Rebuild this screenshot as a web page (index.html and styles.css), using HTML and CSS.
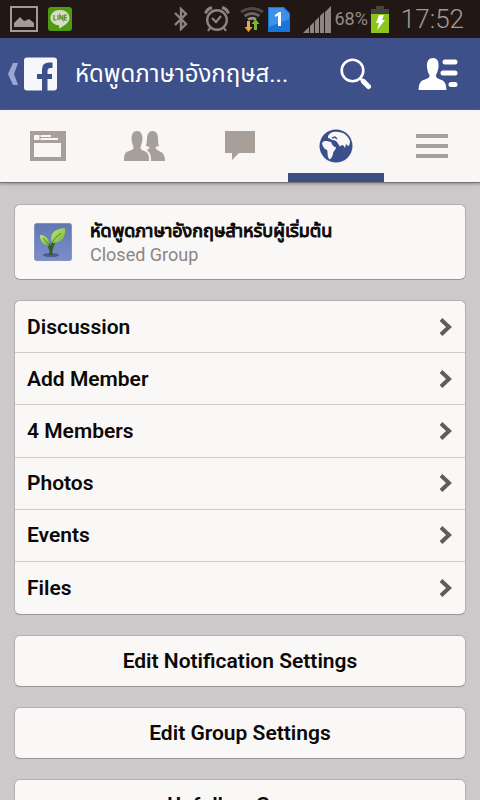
FILE: index.html
```html
<!DOCTYPE html>
<html lang="th">
<head>
<meta charset="utf-8">
<meta name="viewport" content="width=device-width, initial-scale=1">
<title>หัดพูดภาษาอังกฤษสำหรับผู้เริ่มต้น</title>
<link rel="stylesheet" href="styles.css">
</head>
<body>
<div class="status">
  <div class="status-left">
    <svg width="28" height="26" viewBox="0 0 28 26"><rect x="1" y="1" width="26" height="24" fill="none" stroke="#a39a94" stroke-width="2"/><path d="M4 21V17L7 14L10 11L12 13L14 15L17 14L19 13L24 17V21Z" fill="#a39a94"/></svg>
    <svg width="24" height="24" viewBox="0 0 24 24"><rect width="24" height="24" rx="3" fill="#4f9a12"/><path d="M12 3C6.500 3 2.500 6.500 2.500 11C2.500 15 6 17.500 10.500 18.300C11.500 18.700 11.200 20 11 21.500C15 19.500 21.500 16 21.500 11C21.500 6.500 17.500 3 12 3Z" fill="#d8dccb"/><path d="M6 8V13H8.500M10 8V13M12 13V8L15 13V8M19 8H16.700V13H19M16.700 10.500H19" fill="none" stroke="#4f8a22" stroke-width="1.200"/></svg>
  </div>
  <div class="status-right">
    <svg class="bt" width="14" height="24" viewBox="0 0 14 24"><path d="M1 6L12 17L7 22V2L12 7L1 18" fill="none" stroke="#8d847e" stroke-width="2.400"/></svg>
    <svg class="alarm" width="26" height="26" viewBox="0 0 26 26"><g fill="none" stroke="#8d847e" stroke-width="2.400"><circle cx="13" cy="14" r="9.800"/><path d="M8 12L12 16L17 10M6 22L4 25M20 22L22 25" stroke-width="2.200"/><path d="M1.500 7.500Q3 3 8 1.500M24.500 7.500Q23 3 18 1.500" stroke-width="3"/></g></svg>
    <svg class="wifi" width="24" height="28" viewBox="0 0 24 28"><g fill="none" stroke-width="3"><path d="M1 7Q12 0 23 7" stroke="#504843"/><path d="M4.500 11Q12 6 19.500 11" stroke="#6c645e"/><path d="M8 14.500Q12 12 16 14.500" stroke="#968e88"/></g><path d="M7 16H10V22H12.500L8.500 27L4.500 22H7Z" fill="#f2a33c"/><path d="M14 25H17V19H19.500L15.500 14L11.500 19H14Z" fill="#79b82d"/></svg>
    <svg class="sim" width="22" height="25" viewBox="0 0 22 25"><path d="M0 0H16L22 6V25H0Z" fill="#1976d9"/><path d="M1 1H15L21 7V12L1 20Z" fill="#3d91e8"/><path d="M7 8L11 5H13V19H10V8.500L7 10Z" fill="#fff"/></svg>
    <svg class="signal" width="28" height="27" viewBox="0 0 28 27"><path d="M0 27L6 21V27ZM7 27V20L11 16V27ZM12 27V15L16 11V27ZM17 27V10L21 6V27ZM22 27V6L28 0V27Z" fill="#8c8580"/></svg>
    <span class="percent">68%</span>
    <svg class="battery" width="18" height="28" viewBox="0 0 18 28"><path d="M5 1H13V4H18V9H0V4H5Z" fill="#48423e"/><path d="M0 9H18V28H0Z" fill="#8cc51c"/><path d="M8 10H13L11 15H14L6 25L8 18H5Z" fill="#fff"/></svg>
    <time class="clock">17:52</time>
  </div>
</div>
<header class="appbar">
  <button class="home" aria-label="Back">
    <svg width="50" height="34" viewBox="0 0 50 34"><path d="M5 6H10L6 17L10 28H5L0 17Z" fill="#9aa7d3"/><path d="M19 0.500H46Q49 0.500 49 3.500V30.500Q49 33.500 46 33.500H39.500V22H44V17H39.500V14Q39.500 11 42.500 11H44.500V5.500H41Q34 5.500 34 12.500V17H29V22H34V33.500H19Q16 33.500 16 30.500V3.500Q16 .5 19 .5Z" fill="#f6f7fb"/></svg>
  </button>
  <h1 class="title">หัดพูดภาษาอังกฤษส...</h1>
  <button class="search" aria-label="Search">
    <svg width="32" height="32" viewBox="0 0 32 32"><circle cx="12.500" cy="12.500" r="10.800" fill="none" stroke="#fff" stroke-width="2.600"/><path d="M20 20L23 23" stroke="#fff" stroke-width="3"/><path d="M23.500 23.500L28.500 28.500" stroke="#fff" stroke-width="5" stroke-linecap="round"/></svg>
  </button>
  <button class="friends" aria-label="Friends list">
    <svg width="40" height="34" viewBox="0 0 40 34"><path d="M15 1C19.500 1 21 4.500 20.500 10C20 14 19 16 18 18C17.500 21 20 21.500 23.500 23C27 24.500 28 27 28.500 33H.5C1 27 2 24.500 5.500 23C9.500 21.500 12 21 11.500 18C10 16 9.500 14 9 10C8.500 4 11 1 15 1Z" fill="#fff"/><path d="M27 5H37M25 16H37M33 27.500H37" stroke="#fff" stroke-width="5" stroke-linecap="round"/></svg>
  </button>
</header>
<nav class="tabs">
  <a class="tab" href="#feed" aria-label="News feed"><svg width="36" height="30" viewBox="0 0 36 30"><path fill-rule="evenodd" d="M0 0H36V30H0ZM4 4V9H28V7H21V4ZM4 12V26H31V12Z" fill="#a79f99"/><path d="M10 4V9M10 6.500H22" stroke="#a79f99"/></svg></a>
  <a class="tab" href="#people" aria-label="Friends"><svg width="41" height="30" viewBox="0 0 41 30"><g fill="#a79f99"><path d="M13 0C17 0 18.500 3.500 18.500 8C18.500 12 16.500 14 16.500 17C17 20 22 19 24 23C25 25 25 27 25 30H0C0 27 0 25 1 23C3 19 9 20 9.500 17C9.500 14 7.500 12 7.500 8C7.500 3.500 9 0 13 0Z"/><path d="M28.500 0C33 0 34 4 34 8C34 12 34.500 13 35 15L31.500 16C31.500 19 36 20 38.500 22C40.500 24 41 27 41 30H27C27 26 27 23 24.500 20.500L22.500 19C24.500 18 25.500 18 25.500 16L22 15C22.500 12 23 10 23 8C23 3 25 0 28.500 0Z"/></g></svg></a>
  <a class="tab" href="#messages" aria-label="Messages"><svg width="30" height="30" viewBox="0 0 30 30"><path d="M0 0H30V22H14L7 29V22H0Z" fill="#a79f99"/></svg></a>
  <a class="tab active" href="#notifications" aria-label="Notifications" aria-current="page"><svg width="34" height="34" viewBox="0 0 34 34"><circle cx="17" cy="17" r="16.500" fill="#3b4f8d"/><path d="M3 14C5 11 8 12 12 13C13 15 14 18 17 18C17 21 14 22 14 25C13 29 11 31 10 30C8 27 9 23 8 21C6 20 4 19 3 14Z" fill="#f8f7f6"/><path d="M9 7C11 3 15 2 19 3C25 3 29 7 31 12C31 15 30 17 29 17L27 15L26 19L24 16C22 16 21 18 20 17C19 14 18 12 15 11C13 12 11 9 9 9Z" fill="#f8f7f6"/><path d="M13 9L16 8L18 10M14 13Q15 17 18 18L20 16" fill="none" stroke="#3b4f8d" stroke-width="1.500"/></svg></a>
  <a class="tab" href="#more" aria-label="More"><svg width="32" height="26" viewBox="0 0 32 26"><path d="M0 3H32M0 13H32M0 23H32" stroke="#a79f99" stroke-width="4"/></svg></a>
</nav>
<main class="content">
  <section class="card group">
    <svg width="38" height="38" viewBox="0 0 38 38"><defs><linearGradient id="sky" x1="0" y1="0" x2="0" y2="1"><stop offset="0" stop-color="#6078b2"/><stop offset="1" stop-color="#7c8dcb"/></linearGradient><linearGradient id="leaf" x1="0" y1="0" x2="1" y2="1"><stop offset="0" stop-color="#c2ec72"/><stop offset="1" stop-color="#70b23c"/></linearGradient></defs><rect x=".5" y=".5" width="37" height="37" rx="2" fill="url(#sky)" stroke="#8793bd"/><ellipse cx="17" cy="32" rx="8" ry="2" fill="#4c5b8e"/><path d="M16.500 32C17 25 18 20 23 14M16.500 27Q16 22 11 17" fill="none" stroke="#365c20" stroke-width="3"/><path d="M18 20C15 11 20 6 31 5C32 14 28 20 18 20Z" fill="url(#leaf)"/><path d="M15 23C9 22 6 18 6 12C12 12 16 16 15 23Z" fill="url(#leaf)"/><path d="M18 20Q21 14 27 10M15 22L9 15" fill="none" stroke="#4f8d2a"/></svg>
    <div class="group-text">
      <h2 class="group-name">หัดพูดภาษาอังกฤษสำหรับผู้เริ่มต้น</h2>
      <p class="group-type">Closed Group</p>
    </div>
  </section>
  <nav class="card list">
    <a class="row" href="#discussion">Discussion<svg class="chevron" width="13" height="18" viewBox="0 0 13 18"><path d="M2 1.500L10 9L2 16.500"/></svg></a>
    <a class="row" href="#add">Add Member<svg class="chevron" width="13" height="18" viewBox="0 0 13 18"><path d="M2 1.500L10 9L2 16.500"/></svg></a>
    <a class="row" href="#members">4 Members<svg class="chevron" width="13" height="18" viewBox="0 0 13 18"><path d="M2 1.500L10 9L2 16.500"/></svg></a>
    <a class="row" href="#photos">Photos<svg class="chevron" width="13" height="18" viewBox="0 0 13 18"><path d="M2 1.500L10 9L2 16.500"/></svg></a>
    <a class="row" href="#events">Events<svg class="chevron" width="13" height="18" viewBox="0 0 13 18"><path d="M2 1.500L10 9L2 16.500"/></svg></a>
    <a class="row" href="#files">Files<svg class="chevron" width="13" height="18" viewBox="0 0 13 18"><path d="M2 1.500L10 9L2 16.500"/></svg></a>
  </nav>
  <button class="card action">Edit Notification Settings</button>
  <button class="card action">Edit Group Settings</button>
  <button class="card action">Unfollow Group</button>
</main>
</body>
</html>
```
FILE: styles.css
```css
* { box-sizing: border-box; }
html { height: 100%; overflow: hidden; }
body {
  margin: 0;
  height: 100%;
  overflow: hidden;
  background: #cbc9ca;
  font-family: Roboto, "Noto Sans Thai", "Liberation Sans", sans-serif;
  color: #0c0908;
}
svg { display: block; flex: none; }
button {
  margin: 0;
  padding: 0;
  border: 0;
  background: none;
  font: inherit;
  color: inherit;
}
h1, h2, p { margin: 0; }
a { color: inherit; text-decoration: none; }

.status {
  display: flex;
  justify-content: space-between;
  align-items: center;
  height: 38px;
  padding: 0 16px 0 10px;
  background: #211815;
  color: #958c86;
}
.status-left, .status-right { display: flex; align-items: center; }
.status-left { gap: 10px; }
.bt { margin-right: 16px; }
.alarm { margin-right: 10px; }
.wifi { margin-right: 4px; }
.sim { margin-right: 13px; }
.signal { margin-right: 3px; }
.percent { font-size: 18px; line-height: 24px; margin-right: 3px; }
.battery { margin-right: 12px; }
.clock { font-size: 26px; line-height: 30px; font-weight: 300; color: #a39a94; }

.appbar {
  display: flex;
  align-items: center;
  height: 72px;
  padding: 0 22px 0 8px;
  background: #3d5089;
  color: #fff;
}
.title {
  flex: 1;
  margin-left: 17px;
  font-size: 24px;
  line-height: 40px;
  font-weight: 400;
  white-space: nowrap;
}
.search { margin-right: 46px; }

.tabs {
  display: grid;
  grid-template-columns: repeat(5, 1fr);
  height: 73px;
  background: #f8f7f6;
  border-bottom: 1px solid #77706e;
  box-shadow: 0 1px 3px #8f8987;
}
.tab {
  display: flex;
  align-items: center;
  justify-content: center;
  border-top: 9px solid transparent;
  border-bottom: 9px solid transparent;
}
.tab.active { border-bottom-color: #3b4f85; }

.content {
  display: flex;
  flex-direction: column;
  gap: 20px;
  padding: 21px 14px;
}
.card {
  flex: none;
  background: #f9f8f7;
  border: 1px solid #b5adab;
  border-bottom-color: #9d9492;
  border-radius: 6px;
}
.group {
  display: flex;
  align-items: center;
  gap: 18px;
  height: 76px;
  padding: 0 19px;
}
.group-name {
  font-size: 18px;
  line-height: 26px;
  font-weight: 400;
  -webkit-text-stroke: 1px currentColor;
  white-space: nowrap;
}
.group-type { font-size: 18px; line-height: 22px; color: #8b8583; }
.list {
  display: grid;
  grid-auto-rows: 1fr;
  height: 315px;
}
.row {
  display: flex;
  align-items: center;
  justify-content: space-between;
  padding: 0 13px 0 12px;
  border-bottom: 1px solid #cfcbc9;
  font-size: 21px;
  line-height: 28px;
  font-weight: 600;
}
.row:last-child { border-bottom: 0; }
.chevron path { fill: none; stroke: #625b59; stroke-width: 4; }
.action {
  height: 52px;
  font-size: 21px;
  line-height: 28px;
  font-weight: 600;
}
```
